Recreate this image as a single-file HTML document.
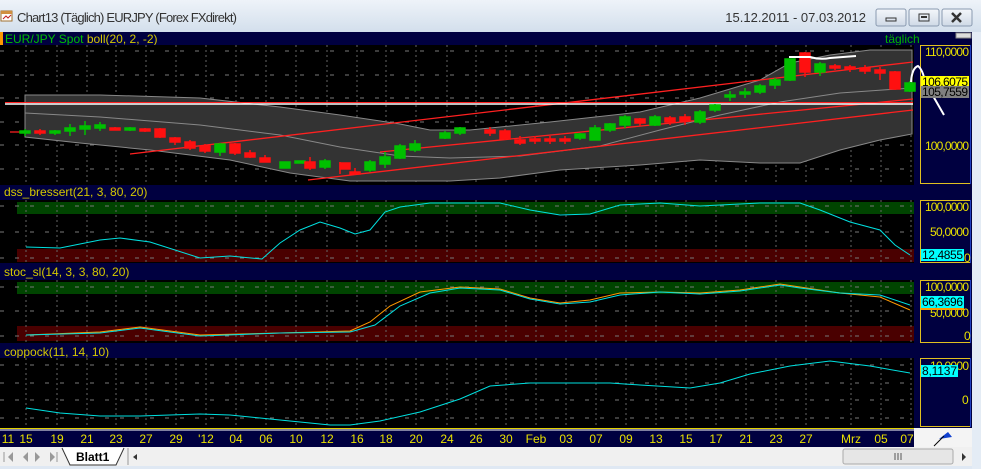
<!DOCTYPE html>
<html><head><meta charset="utf-8"><style>
body{margin:0;width:981px;height:469px;overflow:hidden;background:#dfe8f3;font-family:"Liberation Sans",sans-serif}
svg{display:block}
</style></head><body>
<svg width="981" height="469" viewBox="0 0 981 469" xmlns="http://www.w3.org/2000/svg" font-family="Liberation Sans, sans-serif">
<defs>
<linearGradient id="tb" x1="0" y1="0" x2="0" y2="1"><stop offset="0" stop-color="#eef3f9"/><stop offset="1" stop-color="#d3dfec"/></linearGradient>
<linearGradient id="bt" x1="0" y1="0" x2="0" y2="1"><stop offset="0" stop-color="#f4f7fb"/><stop offset="1" stop-color="#cfd9e6"/></linearGradient>
</defs>
<rect width="981" height="469" fill="#dfe8f3"/>
<rect width="981" height="32" fill="url(#tb)"/>
<rect x="1" y="11" width="11" height="10" fill="#fff" stroke="#a07030"/><rect x="1" y="11" width="11" height="3" fill="#d09040"/><path d="M3 19 L6 16 L8 18 L11 15" stroke="#c02020" fill="none"/>
<text x="17" y="22" font-size="13" fill="#333" textLength="220">Chart13 (Täglich)  EURJPY (Forex FXdirekt)</text>
<text x="866" y="22" font-size="13" fill="#333" text-anchor="end">15.12.2011 - 07.03.2012</text>
<g stroke="#8a9ab0" fill="url(#bt)"><rect x="876" y="9" width="30" height="17" rx="2"/><rect x="909" y="9" width="30" height="17" rx="2"/><rect x="942" y="9" width="30" height="17" rx="2"/></g>
<rect x="886" y="18" width="10" height="3" fill="none" stroke="#333"/>
<rect x="919" y="14" width="10" height="7" fill="none" stroke="#333"/><rect x="921" y="16" width="6" height="2" fill="#333"/>
<path d="M952 13 L961 22 M961 13 L952 22" stroke="#333" stroke-width="2.5"/>
<rect x="0" y="32" width="972" height="415" fill="#000040"/>
<rect x="972" y="32" width="9" height="437" fill="#e4ecf5"/>
<rect x="0" y="32" width="3" height="13" fill="#ff9900"/>
<text x="5" y="43" font-size="12" fill="#00c000">EUR/JPY Spot <tspan fill="#d4c800">boll(20, 2, -2)</tspan></text>
<text x="885" y="43" font-size="12" fill="#00b000">täglich</text>
<rect x="956" y="33" width="15" height="5" fill="#ddd" stroke="#888"/>
<text x="4" y="196" font-size="12" fill="#d4c800">dss_bressert(21, 3, 80, 20)</text>
<text x="4" y="276" font-size="12" fill="#d4c800">stoc_sl(14, 3, 3, 80, 20)</text>
<text x="4" y="356" font-size="12" fill="#d4c800">coppock(11, 14, 10)</text>
<rect x="0" y="45" width="914" height="140" fill="#000"/>
<rect x="0" y="200" width="914" height="63" fill="#000"/>
<rect x="0" y="280" width="914" height="63" fill="#000"/>
<rect x="0" y="358" width="914" height="70" fill="#000"/>
<rect x="17" y="202" width="897" height="12" fill="#004400"/>
<rect x="17" y="249" width="897" height="13" fill="#4a0000"/>
<rect x="17" y="282" width="897" height="12" fill="#004400"/>
<rect x="17" y="326" width="897" height="15" fill="#4a0000"/>
<g fill="#000040" stroke="#e0c020"><rect x="920.5" y="45.5" width="50" height="138"/><rect x="920.5" y="200.5" width="50" height="62"/><rect x="920.5" y="280.5" width="50" height="62"/><rect x="920.5" y="358.5" width="50" height="68"/></g>
<g stroke="#2040c0"><line x1="970.5" y1="45" x2="970.5" y2="184"/><line x1="970.5" y1="200" x2="970.5" y2="263"/><line x1="970.5" y1="280" x2="970.5" y2="343"/><line x1="970.5" y1="358" x2="970.5" y2="427"/></g>
<g stroke="#666" stroke-dasharray="2,3">
<path d="M26 45V185M57 45V185M87 45V185M116 45V185M146 45V185M176 45V185M206 45V185M236 45V185M266 45V185M296 45V185M327 45V185M357 45V185M386 45V185M416 45V185M447 45V185M476 45V185M506 45V185M536 45V185M566 45V185M596 45V185M626 45V185M656 45V185M686 45V185M716 45V185M746 45V185M776 45V185M806 45V185M851 45V185M881 45V185M911 45V185"/>
<path d="M26 200V263M57 200V263M87 200V263M116 200V263M146 200V263M176 200V263M206 200V263M236 200V263M266 200V263M296 200V263M327 200V263M357 200V263M386 200V263M416 200V263M447 200V263M476 200V263M506 200V263M536 200V263M566 200V263M596 200V263M626 200V263M656 200V263M686 200V263M716 200V263M746 200V263M776 200V263M806 200V263M851 200V263M881 200V263M911 200V263"/>
<path d="M26 280V343M57 280V343M87 280V343M116 280V343M146 280V343M176 280V343M206 280V343M236 280V343M266 280V343M296 280V343M327 280V343M357 280V343M386 280V343M416 280V343M447 280V343M476 280V343M506 280V343M536 280V343M566 280V343M596 280V343M626 280V343M656 280V343M686 280V343M716 280V343M746 280V343M776 280V343M806 280V343M851 280V343M881 280V343M911 280V343"/>
<path d="M26 358V428M57 358V428M87 358V428M116 358V428M146 358V428M176 358V428M206 358V428M236 358V428M266 358V428M296 358V428M327 358V428M357 358V428M386 358V428M416 358V428M447 358V428M476 358V428M506 358V428M536 358V428M566 358V428M596 358V428M626 358V428M656 358V428M686 358V428M716 358V428M746 358V428M776 358V428M806 358V428M851 358V428M881 358V428M911 358V428"/>
</g>
<g stroke="#777" stroke-dasharray="4,11">
<path d="M0 51H914M0 75H914M0 98H914M0 122H914M0 145H914M0 169H914M0 206H914M0 232H914M0 258H914M0 287H914M0 311H914M0 336H914M0 365H914M0 383H914M0 400H914M0 418H914"/>
</g>
<path d="M25 95 L100 95 L200 98 L280 107 L340 115 L400 124 L430 130 L470 130 L550 122 L640 112 L700 98 L760 80 L790 63 L830 55 L870 50 L912 50 L912 134 L880 140 L840 150 L800 163 L760 163 L700 160 L640 165 L560 170 L500 178 L450 181 L350 181 L290 173 L230 160 L150 150 L80 143 L25 137 Z" fill="#333" stroke="#888"/>
<path d="M25 113 L100 117 L200 125 L280 135 L340 147 L400 156 L450 158 L520 156 L600 146 L660 130 L720 115 L780 102 L840 93 L912 88" fill="none" stroke="#888"/>
<g stroke="#ff2020" stroke-width="1.3" fill="none">
<path d="M130 154 L913 62"/><path d="M308 180 L913 110"/><path d="M380 152 L913 99"/><path d="M10 132 L30 132"/>
</g>
<line x1="5" y1="104" x2="913" y2="104" stroke="#fff" stroke-width="1.5"/>
<line x1="5" y1="102.5" x2="913" y2="102.5" stroke="#ff2020" stroke-width="1"/>
<g stroke-width="1.5">
<g stroke="#00c000" fill="#00c000">
<path d="M25 129V136M55 130V135M70 124V136M85 121V135M100 122V131M130 127V131M220 143V156M325 159V169M370 160V172M385 152V168M400 144V159M415 140V152M445 131V139M460 127V135M580 133V140M595 125V140M610 123V132M625 115V128M655 115V126M700 110V124M715 104V112M730 91V101M745 88V98M760 84V94M775 78V89M790 59V81M820 62V76M910 81V92"/>
<rect x="20" y="131" width="10" height="2"/><rect x="50" y="131" width="10" height="2"/><rect x="65" y="128" width="10" height="3"/><rect x="80" y="126" width="10" height="3"/><rect x="95" y="125" width="10" height="3"/><rect x="125" y="128" width="10" height="2"/>
<rect x="215" y="144" width="10" height="8"/><rect x="320" y="161" width="10" height="6"/><rect x="365" y="162" width="10" height="8"/><rect x="380" y="157" width="10" height="7"/><rect x="395" y="146" width="10" height="12"/><rect x="410" y="144" width="10" height="6"/><rect x="440" y="133" width="10" height="5"/><rect x="455" y="128" width="10" height="5"/>
<rect x="575" y="134" width="10" height="4"/><rect x="590" y="128" width="10" height="12"/><rect x="605" y="124" width="10" height="6"/><rect x="620" y="117" width="10" height="8"/><rect x="650" y="117" width="10" height="8"/><rect x="695" y="112" width="10" height="10"/><rect x="710" y="105" width="10" height="5"/><rect x="725" y="95" width="10" height="2"/><rect x="740" y="92" width="10" height="2"/><rect x="755" y="86" width="10" height="6"/><rect x="770" y="80" width="10" height="5"/><rect x="785" y="59" width="10" height="21"/><rect x="815" y="64" width="10" height="8"/><rect x="905" y="83" width="10" height="8"/>
<rect x="280" y="162" width="10" height="6"/><rect x="295" y="161" width="10" height="2"/>
</g>
<g stroke="#ff1010" fill="#ff1010">
<path d="M40 129V135M115 127V130M145 128V132M160 128V138M175 137V145M190 140V150M205 144V153M235 143V155M250 150V158M265 155V162M310 157V170M340 162V174M355 168V175M490 127V136M505 129V140M520 136V145M535 136V144M550 136V144M565 136V144M640 118V126M670 116V125M685 114V125M805 52V77M835 64V70M850 65V72M865 65V74M880 67V80M895 71V90"/>
<rect x="35" y="131" width="10" height="2"/><rect x="110" y="128" width="10" height="2"/><rect x="140" y="129" width="10" height="2"/><rect x="155" y="129" width="10" height="8"/><rect x="170" y="138" width="10" height="4"/><rect x="185" y="142" width="10" height="6"/><rect x="200" y="146" width="10" height="5"/><rect x="230" y="144" width="10" height="9"/><rect x="245" y="153" width="10" height="4"/><rect x="260" y="158" width="10" height="4"/><rect x="305" y="162" width="10" height="6"/><rect x="340" y="163" width="10" height="6"/><rect x="350" y="172" width="10" height="2"/>
<rect x="485" y="130" width="10" height="3"/><rect x="500" y="131" width="10" height="8"/><rect x="515" y="140" width="10" height="3"/><rect x="530" y="139" width="10" height="2"/><rect x="545" y="139" width="10" height="2"/><rect x="560" y="139" width="10" height="2"/><rect x="635" y="119" width="10" height="4"/><rect x="665" y="118" width="10" height="4"/><rect x="680" y="117" width="10" height="4"/><rect x="800" y="53" width="10" height="19"/><rect x="830" y="66" width="10" height="2"/><rect x="845" y="67" width="10" height="2"/><rect x="860" y="68" width="10" height="3"/><rect x="875" y="70" width="10" height="3"/><rect x="890" y="72" width="10" height="17"/>
</g>
</g>
<path d="M789 57 L810 57 Q820 60 830 58 L856 56" stroke="#fff" stroke-width="2" fill="none"/>
<path d="M911 82 Q912 68 918 66 Q923 70 925 82 L944 115" stroke="#fff" stroke-width="2" fill="none"/>
<g font-size="12" fill="#e8e000">
<text x="925" y="56" textLength="44">110,0000</text><text x="925" y="150" textLength="44">100,0000</text>
<text x="925" y="211" textLength="44">100,0000</text><text x="930" y="236" textLength="39">50,0000</text><text x="964" y="262">0</text>
<text x="925" y="291" textLength="44">100,0000</text><text x="930" y="317" textLength="39">50,0000</text><text x="964" y="340">0</text>
<text x="930" y="370" textLength="39">10,0000</text><text x="962" y="404">0</text>
</g>
<rect x="921" y="76" width="48" height="12" fill="#ffff00"/><text x="922" y="86" font-size="12" fill="#000" textLength="46">106,6075</text>
<rect x="921" y="86" width="48" height="12" fill="#808080"/><text x="922" y="96" font-size="12" fill="#000" textLength="46">105,7559</text>
<rect x="921" y="249" width="43" height="12" fill="#00ffff"/><text x="922" y="259" font-size="12" fill="#000" textLength="41">12,4855</text>
<rect x="921" y="302" width="43" height="8" fill="#ff9900"/>
<rect x="921" y="296" width="43" height="12" fill="#00ffff"/><text x="922" y="306" font-size="12" fill="#000" textLength="41">66,3696</text>
<rect x="921" y="365" width="37" height="12" fill="#00ffff"/><text x="922" y="375" font-size="12" fill="#000" textLength="35">8,1137</text>
<polyline fill="none" stroke="#00e0e0" points="26,247 60,248 100,240 120,238 150,242 200,258 230,256 262,259 280,243 300,230 320,222 340,228 355,234 370,230 385,212 400,207 430,203 470,203 500,203 530,210 560,215 590,214 620,205 660,203 700,206 760,203 800,203 820,210 850,222 880,230 895,245 910,255"/>
<polyline fill="none" stroke="#ff9900" points="26,335 100,332 140,327 200,335 280,333 350,331 370,322 390,306 420,292 460,287 500,289 530,298 560,303 590,300 620,293 660,292 700,293 740,290 780,284 800,287 840,293 880,297 910,310"/>
<polyline fill="none" stroke="#00e0e0" points="26,335 100,333 140,328 200,336 280,333 350,332 375,325 400,306 430,293 460,288 500,290 530,299 560,304 590,302 620,295 660,292 700,294 740,291 780,285 800,288 840,293 880,295 910,305"/>
<polyline fill="none" stroke="#00e0e0" points="26,408 60,413 100,416 140,416 200,414 230,415 270,419 300,422 330,425 350,425 380,421 420,412 460,399 490,386 530,383 570,383 610,383 640,385 690,388 720,383 750,374 790,366 830,361 870,366 910,373"/>
<rect x="0" y="428" width="914" height="19" fill="#000040"/>
<line x1="0" y1="428.5" x2="914" y2="428.5" stroke="#e0d000"/><line x1="0" y1="430" x2="914" y2="430" stroke="#fff"/>
<g font-size="12" fill="#e8e000" text-anchor="middle">
<text x="8" y="443">11</text><text x="26" y="443">15</text><text x="57" y="443">19</text><text x="87" y="443">21</text><text x="116" y="443">23</text><text x="146" y="443">27</text><text x="176" y="443">29</text><text x="206" y="443">'12</text><text x="236" y="443">04</text><text x="266" y="443">06</text><text x="296" y="443">10</text><text x="327" y="443">12</text><text x="357" y="443">16</text><text x="386" y="443">18</text><text x="416" y="443">20</text><text x="447" y="443">24</text><text x="476" y="443">26</text><text x="506" y="443">30</text><text x="536" y="443">Feb</text><text x="566" y="443">03</text><text x="596" y="443">07</text><text x="626" y="443">09</text><text x="656" y="443">13</text><text x="686" y="443">15</text><text x="716" y="443">17</text><text x="746" y="443">21</text><text x="776" y="443">23</text><text x="806" y="443">27</text><text x="851" y="443">Mrz</text><text x="881" y="443">05</text><text x="907" y="443">07</text>
</g>
<rect x="914" y="428" width="58" height="19" fill="#f4f4f4"/>
<path d="M939 439 L948 432 L952 437 Z" fill="#1040d0"/><line x1="934" y1="446" x2="944" y2="436" stroke="#000"/>
<rect x="0" y="447" width="972" height="22" fill="#f0f0f0"/>
<rect x="0" y="466" width="972" height="3" fill="#dfe8f3"/>
<g fill="#999"><path d="M13 452L8 457L13 462Z"/><path d="M28 452L23 457L28 462Z"/><path d="M35 452L40 457L35 462Z"/><path d="M50 452L55 457L50 462Z"/></g>
<path d="M4 452V462" stroke="#999"/><path d="M57 452V462" stroke="#999"/>
<path d="M62 448 L70 465 L116 465 L124 448" fill="#fff" stroke="#333"/>
<text x="76" y="461" font-size="12" font-weight="bold" fill="#000">Blatt1</text>
<line x1="128" y1="448" x2="128" y2="465" stroke="#999"/>
<path d="M137 454 L133 457 L137 460Z" fill="#333"/>
<rect x="843" y="449" width="110" height="15" rx="2" fill="#e6e6e6" stroke="#aaa"/>
<path d="M895 453V460M898 453V460M901 453V460" stroke="#555"/>
<path d="M962 453 L966 457 L962 461Z" fill="#333"/>
</svg>
</body></html>
